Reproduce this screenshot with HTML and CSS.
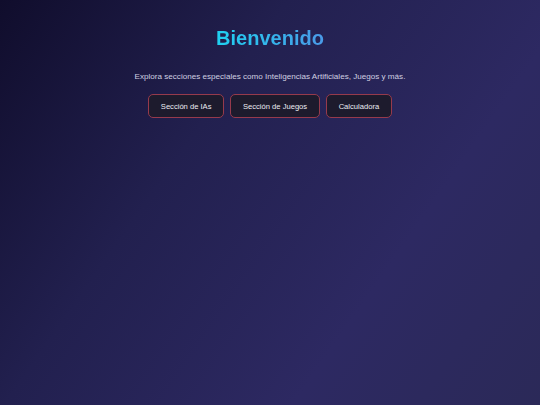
FILE: index.html
```html
<!DOCTYPE html>
<html lang="es">
<head>
<meta charset="utf-8">
<title>Bienvenido</title>
<link rel="stylesheet" href="styles.css">
</head>
<body>
<main class="page">
  <h1 class="title">Bienvenido</h1>
  <p class="lead">Explora secciones especiales como Inteligencias Artificiales, Juegos y más.</p>
  <nav class="actions">
    <a class="btn" href="#">Sección de IAs</a>
    <a class="btn" href="#">Sección de Juegos</a>
    <a class="btn" href="#">Calculadora</a>
  </nav>
</main>
</body>
</html>
```

FILE: styles.css
```css
html, body {
  margin: 0;
  padding: 0;
  height: 100%;
}
body {
  font-family: "Liberation Sans", Arial, sans-serif;
  background: linear-gradient(125deg, #100d2c 0%, #22204f 35%, #2d2962 70%, #2b2958 100%);
  color: #fff;
  overflow: hidden;
}
.page {
  display: flex;
  flex-direction: column;
  align-items: center;
  padding-top: 26px;
}
.title {
  margin: 0;
  font-size: 20px;
  line-height: 24px;
  font-weight: bold;
  background: linear-gradient(90deg, #1fd0f0, #4a9ae8);
  -webkit-background-clip: text;
  background-clip: text;
  color: transparent;
}
.lead {
  margin: 22px 0 0;
  font-size: 8.1px;
  line-height: 10px;
  color: #cfcfe0;
}
.actions {
  display: flex;
  gap: 6.5px;
  margin-top: 12px;
}
.btn {
  display: block;
  padding: 6.5px 11.5px;
  font-size: 7.6px;
  line-height: 9px;
  color: #ececf2;
  text-decoration: none;
  background: #1d1b2d;
  border: 1.5px solid #963a4c;
  border-radius: 5px;
}
```
